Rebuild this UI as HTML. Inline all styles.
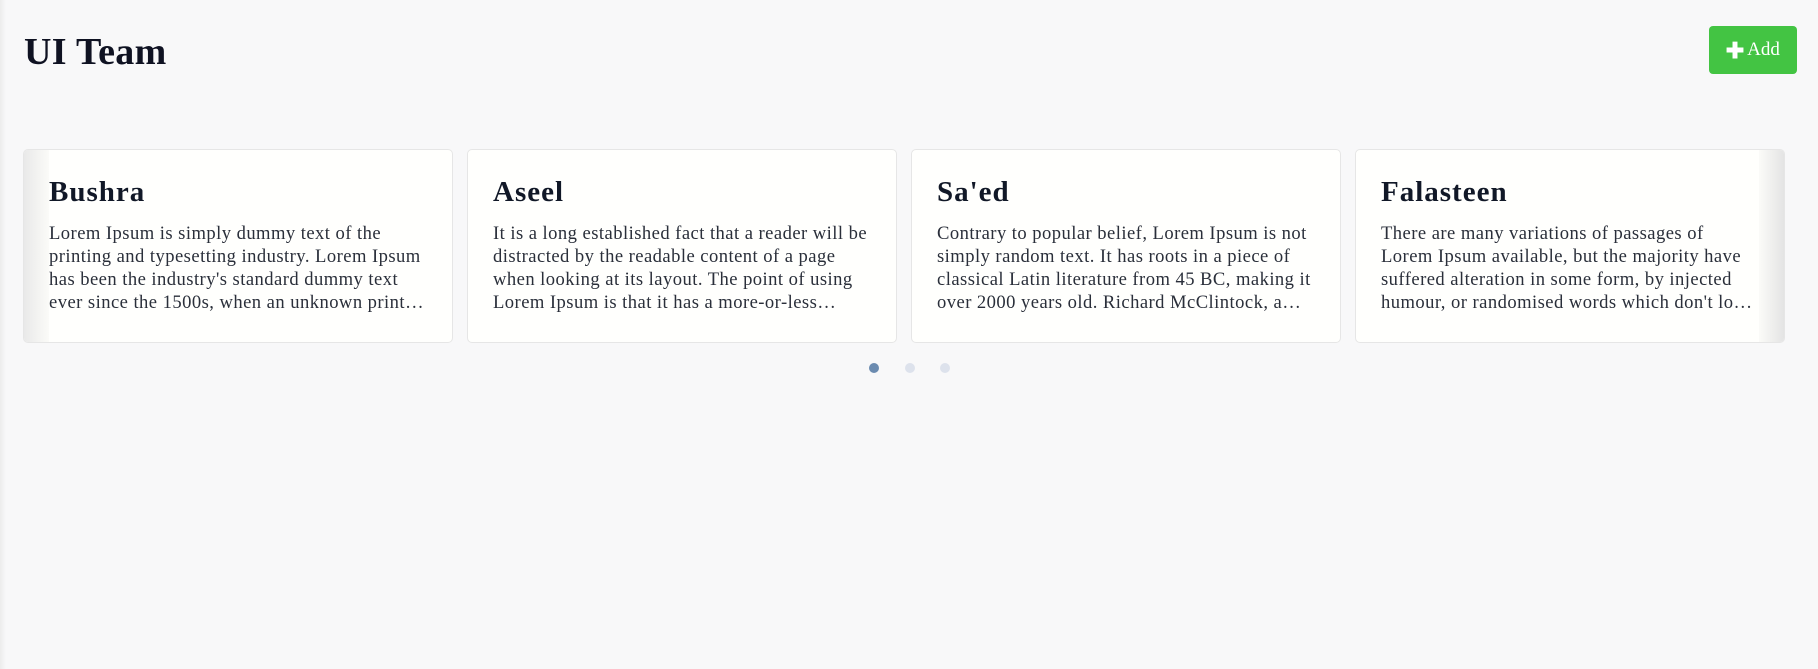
<!DOCTYPE html>
<html><head><meta charset="utf-8"><style>
*{margin:0;padding:0;box-sizing:border-box}
body{width:1818px;height:669px;background:#f8f8f9;font-family:"Liberation Serif",serif;position:relative;overflow:hidden;color:#111827}
.edge{position:absolute;left:0;top:0;width:6px;height:669px;background:linear-gradient(90deg,#ececec,#f8f8f9)}
h1{position:absolute;left:24px;top:30px;font-size:38px;font-weight:bold;color:#0f1222;letter-spacing:0.3px}
.add{position:absolute;left:1709px;top:26px;width:88px;height:48px;background:#43c443;border-radius:4px;color:#fff;font-size:19px;display:flex;align-items:center;justify-content:center;gap:3px}
.card{position:absolute;top:149px;width:430px;height:194px;background:#fffffd;border:1px solid #e6e6e6;border-radius:5px;padding:24px 20px 24px 25px;overflow:hidden}
.card h2{font-size:29px;font-weight:bold;line-height:36px;color:#111827;margin-bottom:12px;letter-spacing:1px}
.card p{font-size:18.6px;line-height:23px;color:#2a2f3a;letter-spacing:0.45px;display:-webkit-box;-webkit-line-clamp:4;-webkit-box-orient:vertical;overflow:hidden}
.gl{position:absolute;left:0;top:0;width:25px;height:100%;background:linear-gradient(90deg,#e9e9e9,#fbfbf8)}
.gr{position:absolute;right:0;top:0;width:25px;height:100%;background:linear-gradient(270deg,#e4e4e4,#fbfbf8)}
.dot{position:absolute;top:363px;width:10px;height:10px;border-radius:50%;background:#dde2ec}
</style></head><body>
<div class="edge"></div>
<h1>UI Team</h1>
<div class="add"><svg width="18" height="18" viewBox="0 0 16 16"><path d="M5.8 0.5h4.4v5.3h5.3v4.4h-5.3v5.3H5.8v-5.3H0.5V5.8h5.3z" fill="#fff"/></svg>Add</div>
<div class="card" style="left:23px"><div class="gl"></div><h2>Bushra</h2><p>Lorem Ipsum is simply dummy text of the printing and typesetting industry. Lorem Ipsum has been the industry's standard dummy text ever since the 1500s, when an unknown printer took a galley</p></div>
<div class="card" style="left:467px"><h2>Aseel</h2><p>It is a long established fact that a reader will be distracted by the readable content of a page when looking at its layout. The point of using Lorem Ipsum is that it has a more-or-less normal distribution</p></div>
<div class="card" style="left:911px"><h2>Sa'ed</h2><p>Contrary to popular belief, Lorem Ipsum is not simply random text. It has roots in a piece of classical Latin literature from 45 BC, making it over 2000 years old. Richard McClintock, a Latin professor</p></div>
<div class="card" style="left:1355px;padding-right:24.5px"><div class="gr"></div><h2>Falasteen</h2><p>There are many variations of passages of Lorem Ipsum available, but the majority have suffered alteration in some form, by injected humour, or randomised words which don't look even slightly</p></div>
<div class="dot" style="left:869px;background:#6b8bb0"></div>
<div class="dot" style="left:905px"></div>
<div class="dot" style="left:940px"></div>
</body></html>
